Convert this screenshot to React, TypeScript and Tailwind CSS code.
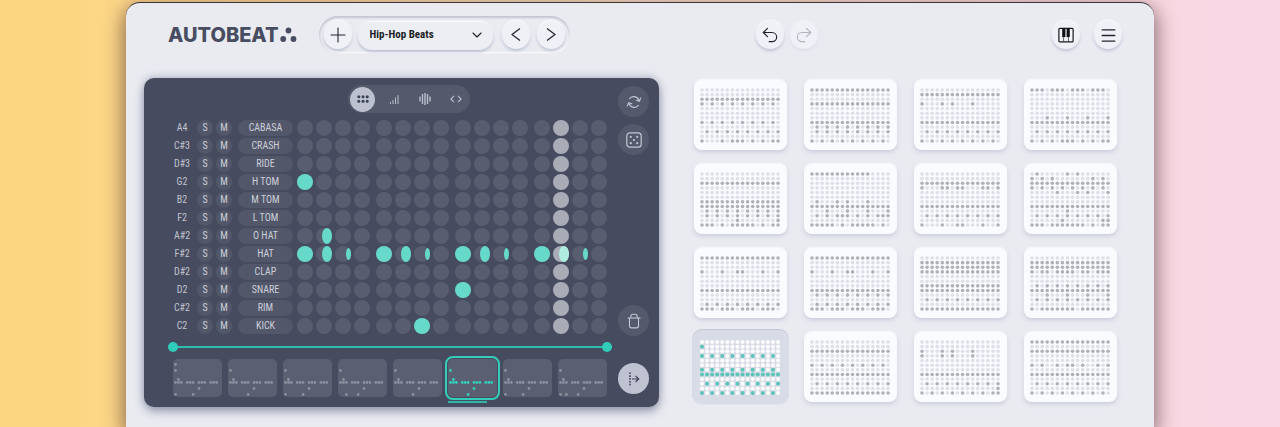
import { useState } from "react";
import type { ReactNode } from "react";
import { ChevronDown, Menu, Plus, Redo2, Undo2 } from "lucide-react";

type Level = "full" | "mid" | "low";

type Track = {
  note: string;
  name: string;
  hits: Record<number, Level>;
};

const STEPS = Array.from({ length: 16 }, (_, i) => i);
const ROWS = Array.from({ length: 12 }, (_, i) => i);
const BARS = [0, 1, 2, 3];
const PLAYHEAD = 13;

const TRACKS: Track[] = [
  { note: "A4", name: "CABASA", hits: {} },
  { note: "C#3", name: "CRASH", hits: {} },
  { note: "D#3", name: "RIDE", hits: {} },
  { note: "G2", name: "H TOM", hits: { 0: "full" } },
  { note: "B2", name: "M TOM", hits: {} },
  { note: "F2", name: "L TOM", hits: {} },
  { note: "A#2", name: "O HAT", hits: { 1: "mid" } },
  {
    note: "F#2",
    name: "HAT",
    hits: {
      0: "full", 1: "mid", 2: "low",
      4: "full", 5: "mid", 6: "low",
      8: "full", 9: "mid", 10: "low",
      12: "full", 13: "mid", 14: "low",
    },
  },
  { note: "D#2", name: "CLAP", hits: {} },
  { note: "D2", name: "SNARE", hits: { 8: "full" } },
  { note: "C#2", name: "RIM", hits: {} },
  { note: "C2", name: "KICK", hits: { 6: "full" } },
];

const LEVEL_CLASS: Record<Level, string> = {
  full: "h-4 w-4",
  mid: "h-4 w-[10px]",
  low: "h-3 w-[5px]",
};

// row index -> 16 steps, "x" is a hit
type Grid = Record<number, string>;

const ALL = "xxxxxxxxxxxxxxxx";
const EVEN = "x.x.x.x.x.x.x.x.";
const ODD = ".x.x.x.x.x.x.x.x";

const PRESETS: Grid[] = [
  { 2: ALL, 3: EVEN, 7: EVEN, 9: ODD, 11: "x...x.xxx.x.x.xx" },
  { 0: ALL, 3: ALL, 7: ALL, 8: ODD, 9: ODD, 11: EVEN },
  { 1: ALL, 3: "x...x.x...x.....", 7: ALL, 9: ODD, 11: EVEN },
  { 0: "xxx.xxx.xxx.xxx.", 6: "...x...x...x...x", 7: ALL, 9: ODD, 11: "x.x.x.xxx.x.x.xx" },
  { 2: ALL, 6: ALL, 7: ALL, 8: ODD, 9: ODD, 10: ".......x.......x", 11: "xxx.x.xxxxx.x.xx" },
  { 0: "xxxxxxxxxxxx....", 6: ".x...x.x...x....", 7: ALL, 8: "...x...x...x...x", 9: ".x.x.xxx.x.x.xxx", 11: "xxxxx.x.xxxxx.x." },
  { 2: ALL, 3: "x...xx.xx...xx.x", 7: ALL, 9: ODD, 11: "x...x..xx...x..x" },
  {
    0: ".x.....x.x......",
    1: "x.x.x.......x.x.",
    2: ALL,
    3: "x.x.x.x.x.x.x.x.",
    4: ".....x...x.x...x",
    7: ALL,
    8: ".......x........",
    9: ODD,
    10: "......x.......xx",
    11: "xxx.xxxxxxx.x.xx",
  },
  { 0: ALL, 3: "x...x..xx...x..x", 7: ALL, 10: ODD, 11: "xxx.xxx.xxx.xxx." },
  { 0: ALL, 3: "x...x..xx...x..x", 7: ALL, 8: ODD, 10: ODD, 11: "xxx.xxx.xxx.xxx." },
  { 1: ALL, 2: ALL, 3: ALL, 6: ALL, 7: ALL, 9: ODD, 11: ALL },
  {
    1: ALL,
    2: ALL,
    3: "x.xx.xxxx.xx.xxx",
    6: ODD,
    7: ALL,
    8: "...x...x...x...x",
    9: ODD,
    11: "x.xxxxxxx.xxxxxx",
  },
  { 1: "x...............", 3: EVEN, 6: EVEN, 7: ALL, 9: ODD, 11: EVEN },
  { 2: ALL, 5: EVEN, 7: ALL, 9: ODD, 11: ALL },
  { 2: "x...x.x...x.....", 3: "x...x.x...x.....", 7: ALL, 9: ODD, 10: "...............x", 11: "x.x.x.x.x.x.x.xx" },
  { 0: ALL, 2: ALL, 5: "x.x..x.xx.x..x.x", 7: ALL, 9: ODD, 11: EVEN },
];

const HATS = "xxx.xxx.xxx.xxx.";
const BASE: Grid = { 3: "x", 6: ".x", 7: HATS, 9: "........x" };

const PATTERNS: Grid[] = [
  { ...BASE, 1: "x", 11: "x.....x" },
  { ...BASE, 11: "......x" },
  { ...BASE, 11: "x.....x" },
  { ...BASE, 11: "..x...x" },
  { ...BASE, 11: "......x" },
  { ...BASE, 11: "......x" },
  { ...BASE, 11: "x.....x" },
  { ...BASE, 11: "x.x...x" },
];

function PresetDots({ grid, active }: { grid: Grid; active: boolean }) {
  const on = active ? "#5cc4b8" : "#b0b0b7";
  const off = active ? "#fdfdfe" : "#dde0e8";

  return (
    <svg viewBox="0 0 80 55" className="w-full" aria-hidden="true">
      {ROWS.map((r) =>
        STEPS.map((s) => (
          <circle
            key={`${r}-${s}`}
            cx={2 + s * 5.07}
            cy={2 + r * 4.64}
            r={active ? 2 : 1.8}
            fill={grid[r]?.[s] === "x" ? on : off}
          />
        ))
      )}
    </svg>
  );
}

function PatternDots({ grid, active }: { grid: Grid; active: boolean }) {
  return (
    <svg viewBox="0 0 49 38" className="w-full" aria-hidden="true">
      {ROWS.map((r) =>
        STEPS.map((s) =>
          grid[r]?.[s] === "x" ? (
            <circle
              key={`${r}-${s}`}
              cx={2.5 + s * 2.94}
              cy={2.5 + r * 3}
              r={1.4}
              fill={active ? "#35cdb9" : "#8b909f"}
            />
          ) : null
        )
      )}
    </svg>
  );
}

function RoundButton({
  label,
  faded,
  children,
}: {
  label: string;
  faded?: boolean;
  children: ReactNode;
}) {
  return (
    <button
      aria-label={label}
      disabled={faded}
      className="flex h-7 w-7 shrink-0 items-center justify-center rounded-full bg-[#eff1f6] text-[#23252d] shadow-[0_2px_3px_rgba(120,130,165,0.35),0_-1px_2px_#ffffff] disabled:text-[#b3b5bd] disabled:shadow-[0_1px_3px_rgba(120,130,165,0.14),0_-1px_2px_#f6f7fb]"
    >
      {children}
    </button>
  );
}

function SideButton({ label, children }: { label: string; children: ReactNode }) {
  return (
    <button
      aria-label={label}
      className="flex h-[31px] w-[31px] items-center justify-center rounded-full bg-[#54596c] text-[#c3c6d2]"
    >
      {children}
    </button>
  );
}

function Header() {
  return (
    <header className="flex items-center pt-[13px] pr-8 pl-[42px]">
      <div className="flex items-center gap-px text-[#484c60]">
        <span className="font-['Inter',sans-serif] text-[20px] leading-6 font-extrabold">AUTOBEAT</span>
        <svg width="17" height="16" viewBox="0 0 17 16" fill="currentColor" aria-hidden="true">
          <circle cx="8.5" cy="3.5" r="2.9" />
          <circle cx="3.2" cy="12" r="2.9" />
          <circle cx="13.5" cy="12" r="2.9" />
        </svg>
      </div>

      <div className="ml-[22px] flex h-[38px] items-center rounded-full bg-[#e9ebf1] px-[5px] shadow-[inset_0_2px_2px_#c3c6d0,inset_1px_0_2px_#d3d6de,inset_0_-2px_1px_#fbfbfd]">
        <RoundButton label="New pattern">
          <Plus size={24} strokeWidth={1.1} />
        </RoundButton>

        <div className="relative ml-[6px] text-[#1b1d24]">
          <select
            aria-label="Genre"
            className="h-7 w-[135px] appearance-none rounded-full bg-[#eceef3] pl-3 font-['Roboto_Condensed','Liberation_Sans_Narrow',Roboto,sans-serif] text-[11px] font-bold shadow-[0_2px_3px_rgba(120,130,165,0.4),0_-1px_2px_#ffffff]"
          >
            <option>Hip-Hop Beats</option>
          </select>
          <ChevronDown size={16} strokeWidth={1.6} className="pointer-events-none absolute top-[7px] right-2" />
        </div>

        <div className="ml-[9px] flex gap-[7px]">
          <RoundButton label="Previous">
            <svg width="14" height="16" viewBox="0 0 14 16" fill="none" stroke="currentColor" strokeWidth="1.2">
              <path d="M11 1.500 3 7.500l8 6" />
            </svg>
          </RoundButton>
          <RoundButton label="Next">
            <svg width="14" height="16" viewBox="0 0 14 16" fill="none" stroke="currentColor" strokeWidth="1.2">
              <path d="m3 1.500 8 6-8 6" />
            </svg>
          </RoundButton>
        </div>
      </div>

      <div className="mx-auto flex gap-[6px] pr-12">
        <RoundButton label="Undo">
          <Undo2 size={20} strokeWidth={1.4} />
        </RoundButton>
        <RoundButton label="Redo" faded>
          <Redo2 size={20} strokeWidth={1.4} />
        </RoundButton>
      </div>

      <div className="flex gap-[14px]">
        <RoundButton label="Keyboard">
          <svg width="16" height="16" viewBox="0 0 16 16" aria-hidden="true">
            <rect x="0.9" y="1.3" width="14.2" height="13.6" rx="1" fill="#f4f5f8" stroke="#17181c" strokeWidth="1.2" />
            <path d="M5.6 10v5M10.4 10v5M8 2v8" stroke="#3a3c44" strokeWidth="0.8" />
            <path d="M4.2 1.5h2.9v8.6H4.2zM8.9 1.5h2.9v8.6H8.9z" fill="#101114" />
          </svg>
        </RoundButton>
        <RoundButton label="Menu">
          <Menu size={19} strokeWidth={1.6} />
        </RoundButton>
      </div>
    </header>
  );
}

function ViewTabs() {
  const tab = "flex h-[25px] w-[25px] items-center justify-center rounded-full";

  return (
    <div className="flex h-7 items-center gap-[6px] rounded-full bg-[#54596c] px-[2px] text-[#b9bdca]">
      <button aria-label="Grid view" className={`${tab} bg-[#bcc0cf] text-[#3c4053]`}>
        <svg width="12" height="8" viewBox="0 0 12 8" fill="currentColor">
          <circle cx="1.8" cy="1.8" r="1.5" />
          <circle cx="6" cy="1.8" r="1.5" />
          <circle cx="10.2" cy="1.8" r="1.5" />
          <circle cx="1.8" cy="6.2" r="1.5" />
          <circle cx="6" cy="6.2" r="1.5" />
          <circle cx="10.2" cy="6.2" r="1.5" />
        </svg>
      </button>
      <button aria-label="Velocity view" className={tab}>
        <svg width="10" height="10" viewBox="0 0 10 10" stroke="currentColor" strokeWidth="1">
          <path d="M1.5 10V8M4 10V6M6.5 10V3.5M9 10V1" />
        </svg>
      </button>
      <button aria-label="Length view" className={tab}>
        <svg width="12" height="12" viewBox="0 0 12 12" stroke="currentColor" strokeWidth="1.4">
          <path d="M1 8.5v-5M3.5 11V1M6 12V0M8.5 11V1M11 8.5v-5" />
        </svg>
      </button>
      <button aria-label="Code view" className={tab}>
        <svg width="12" height="8" viewBox="0 0 12 8" fill="none" stroke="currentColor" strokeWidth="1.2">
          <path d="M4 .8.9 4 4 7.2M8 .8 11.1 4 8 7.2" />
        </svg>
      </button>
    </div>
  );
}

function TrackRow({ track }: { track: Track }) {
  return (
    <div className="flex h-4 items-center text-[10px] leading-4 text-[#cdd0da]">
      <span className="w-[28px] text-center text-[#c0c3ce]">{track.note}</span>
      <button aria-label={`Solo ${track.name}`} className="ml-px h-4 w-4 rounded-full bg-[#52576a]">
        S
      </button>
      <button aria-label={`Mute ${track.name}`} className="ml-[3px] h-4 w-4 rounded-full bg-[#52576a]">
        M
      </button>
      <button className="ml-[6px] h-4 w-[55px] rounded-full bg-[#52576a]">{track.name}</button>

      <div className="ml-1 flex flex-1 justify-between">
        {BARS.map((bar) => (
          <div key={bar} className="flex gap-[3px]">
            {BARS.map((beat) => {
              const step = bar * 4 + beat;
              const hit = track.hits[step];
              const playing = step === PLAYHEAD;

              return (
                <button
                  key={step}
                  aria-label={`${track.name} step ${step + 1}`}
                  className={`flex h-4 w-4 items-center justify-end rounded-full ${
                    playing ? "bg-[#a9acb7]" : "bg-[#585d70]"
                  }`}
                >
                  {hit && (
                    <span
                      className={`rounded-[50%] ${LEVEL_CLASS[hit]} ${
                        playing ? "bg-[#b0ecdf]" : "bg-[#66d9cb]"
                      }`}
                    />
                  )}
                </button>
              );
            })}
          </div>
        ))}
      </div>
    </div>
  );
}

function LoopRange() {
  const range =
    "h-[10px] min-w-0 flex-1 appearance-none bg-transparent [&::-webkit-slider-runnable-track]:h-[2px] [&::-webkit-slider-runnable-track]:bg-[#2fbfae] [&::-webkit-slider-thumb]:-mt-1 [&::-webkit-slider-thumb]:h-[10px] [&::-webkit-slider-thumb]:w-[10px] [&::-webkit-slider-thumb]:appearance-none [&::-webkit-slider-thumb]:rounded-full [&::-webkit-slider-thumb]:bg-[#2fcdb9]";

  return (
    <div className="-mr-[5px] flex">
      <input type="range" aria-label="Loop start" min={0} max={8} defaultValue={0} className={range} />
      <input type="range" aria-label="Loop end" min={8} max={16} defaultValue={16} className={range} />
    </div>
  );
}

function PatternStrip() {
  const [current, setCurrent] = useState(5);

  return (
    <div className="grid grid-cols-8 gap-[6px] pl-[5px]">
      {PATTERNS.map((grid, i) => (
        <button
          key={i}
          aria-label={`Pattern ${i + 1}`}
          onClick={() => setCurrent(i)}
          className={`relative rounded-[5px] ${
            i === current
              ? "bg-[#5a5f72] outline-2 outline-offset-1 outline-[#35cdb9]"
              : "bg-[#5a5f72]"
          }`}
        >
          <PatternDots grid={grid} active={i === current} />
          {i === current && (
            <span className="absolute -bottom-[6px] left-0 h-[2px] w-4/5 bg-[#2fb5a6]" />
          )}
        </button>
      ))}
    </div>
  );
}

function Sequencer() {
  return (
    <section className="flex min-w-0 gap-[11px] rounded-[10px] bg-[#464b5f] pr-[10px] pl-6 font-['Roboto_Condensed','Liberation_Sans_Narrow',Roboto,sans-serif] shadow-[0_4px_10px_rgba(70,75,110,0.55),0_-3px_6px_rgba(160,168,190,0.35)]">
      <div className="flex min-w-0 flex-1 flex-col pt-[7px] pb-[10px]">
        <div className="flex justify-center pl-[43px]">
          <ViewTabs />
        </div>
        <div className="mt-[7px] flex flex-col gap-[2px]">
          {TRACKS.map((track) => (
            <TrackRow key={track.name} track={track} />
          ))}
        </div>
        <div className="mt-2">
          <LoopRange />
        </div>
        <div className="mt-[7px]">
          <PatternStrip />
        </div>
      </div>

      <div className="flex flex-col pt-2 pb-[13px]">
        <div className="flex flex-col gap-[7px]">
          <SideButton label="Regenerate">
            <svg width="16" height="16" viewBox="0 0 16 16" fill="none" stroke="currentColor" strokeWidth="1.1">
              <path d="M3.2 5A5.6 5.6 0 0 1 13 6.2M14.9 3.6l-1.5 3.6-3.6-1.3" />
              <path d="M12.8 11A5.6 5.6 0 0 1 3 9.8M1.1 12.4l1.5-3.6 3.6 1.3" />
            </svg>
          </SideButton>
          <SideButton label="Randomize">
            <svg width="16" height="16" viewBox="0 0 16 16" fill="currentColor">
              <rect x="0.8" y="0.8" width="14.4" height="14.4" rx="3" fill="none" stroke="currentColor" strokeWidth="1.2" />
              <circle cx="4.8" cy="4.8" r="1.1" />
              <circle cx="11.2" cy="4.8" r="1.1" />
              <circle cx="8" cy="8" r="1.1" />
              <circle cx="4.8" cy="11.2" r="1.1" />
              <circle cx="11.2" cy="11.2" r="1.1" />
            </svg>
          </SideButton>
        </div>
        <div className="mt-auto flex flex-col gap-[27px]">
          <SideButton label="Clear">
            <svg width="14" height="16" viewBox="0 0 14 16" fill="none" stroke="currentColor" strokeWidth="1.1">
              <path d="M.5 5h13" />
              <path d="M2.5 5v7.800c0 1.400.7 2.100 2 2.100h5c1.300 0 2-.7 2-2.100V5" />
              <path d="M3.800 4.800V3.600C3.800 2 4.600 1.200 6 1.200h2c1.400 0 2.200.8 2.200 2.400v1.200" />
            </svg>
          </SideButton>
          <button
            aria-label="Export"
            className="flex h-[31px] w-[31px] items-center justify-center rounded-full bg-[#bfc2d1] text-[#3f4356]"
          >
            <svg width="12" height="14" viewBox="0 0 12 14" fill="none" stroke="currentColor" strokeWidth="1.2">
              <path d="M2 .5v13" strokeWidth="1.6" strokeDasharray="1.6 1.2" />
              <path d="M4 7h6.5M7.5 3.8 10.7 7l-3.2 3.2" />
            </svg>
          </button>
        </div>
      </div>
    </section>
  );
}

function PresetGrid() {
  const [selected, setSelected] = useState(12);

  return (
    <section className="mt-[2px] grid min-w-0 grid-cols-4 content-start gap-x-[17px] gap-y-[14px]">
      {PRESETS.map((grid, i) => (
        <button
          key={i}
          aria-label={`Preset ${i + 1}`}
          onClick={() => setSelected(i)}
          className={`flex rounded-lg pt-2 pr-[7px] pb-[7px] pl-[6px] ${
            i === selected
              ? "bg-[#d7dce7] shadow-[0_0_0_2px_#d7dce7,0_-1px_0_2px_#c3c8d4,0_1px_0_2px_#e1e4ec]"
              : "bg-[#fafbfe] shadow-[0_2px_4px_rgba(150,158,185,0.4),0_-1px_2px_#ffffff]"
          }`}
        >
          <PresetDots grid={grid} active={i === selected} />
        </button>
      ))}
    </section>
  );
}

export default function App() {
  return (
    <div className="flex min-h-screen flex-col overflow-hidden bg-linear-to-r from-[#fdd681] from-5% via-[#f9dcc4] to-[#fad7e4] to-95% px-[126px] pt-[2px]">
      <main className="flex-1 rounded-t-[14px] border-t border-[#3c3638] bg-[#e9ebf1] pb-5 shadow-[0_6px_20px_2px_rgba(60,30,35,0.6)]">
        <Header />
        <div className="mt-6 grid grid-cols-[515fr_423fr] gap-[35px] pr-[37px] pl-[18px]">
          <Sequencer />
          <PresetGrid />
        </div>
      </main>
    </div>
  );
}
